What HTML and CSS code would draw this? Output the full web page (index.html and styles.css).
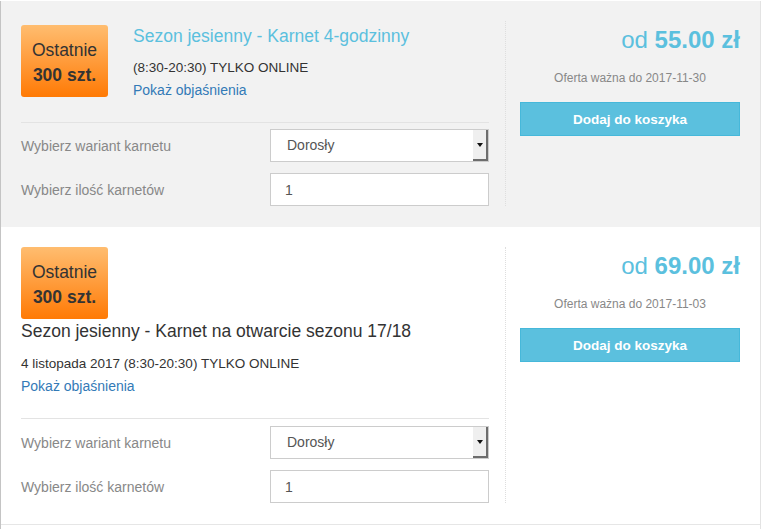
FILE: index.html
```html
<!DOCTYPE html>
<html lang="pl">
<head>
  <meta charset="UTF-8" />
  <meta name="viewport" content="width=device-width, initial-scale=1.0"/>
  <title>Karnety</title>
  <link rel="stylesheet" href="styles.css">
</head>
<body>

  <div class="list">

    <div class="item item-grey">
      <div class="item-main">
        <div class="item-head item-head-row">
          <div class="badge"><span>Ostatnie</span><strong>300 szt.</strong></div>
          <div class="item-info">
            <a class="item-title title-link" href="#">Sezon jesienny - Karnet 4-godzinny</a>
            <p class="item-desc">(8:30-20:30) TYLKO ONLINE</p>
            <a class="explain" href="#">Pokaż objaśnienia</a>
          </div>
        </div>

        <div class="options">
          <div class="option-row">
            <label>Wybierz wariant karnetu</label>
            <div class="select"><span class="select-value">Dorosły</span><span class="select-arrow"><i></i></span></div>
          </div>
          <div class="option-row">
            <label>Wybierz ilość karnetów</label>
            <input class="qty" type="text" value="1" />
          </div>
        </div>
      </div>

      <div class="item-side">
        <div class="price">od <b>55.00 zł</b></div>
        <div class="valid">Oferta ważna do 2017-11-30</div>
        <button class="add-btn">Dodaj do koszyka</button>
      </div>
    </div>

    <div class="item item-last">
      <div class="item-main">
        <div class="item-head">
          <div class="badge"><span>Ostatnie</span><strong>300 szt.</strong></div>
          <div class="item-title">Sezon jesienny - Karnet na otwarcie sezonu 17/18</div>
          <p class="item-desc">4 listopada 2017 (8:30-20:30) TYLKO ONLINE</p>
          <a class="explain" href="#">Pokaż objaśnienia</a>
        </div>

        <div class="options">
          <div class="option-row">
            <label>Wybierz wariant karnetu</label>
            <div class="select"><span class="select-value">Dorosły</span><span class="select-arrow"><i></i></span></div>
          </div>
          <div class="option-row">
            <label>Wybierz ilość karnetów</label>
            <input class="qty" type="text" value="1" />
          </div>
        </div>
      </div>

      <div class="item-side">
        <div class="price">od <b>69.00 zł</b></div>
        <div class="valid">Oferta ważna do 2017-11-03</div>
        <button class="add-btn">Dodaj do koszyka</button>
      </div>
    </div>

    <div class="item-next"></div>

  </div>

</body>
</html>
```

FILE: styles.css
```css
body {
  font-family: "Liberation Sans", Arial, sans-serif;
  background: #fff;
  color: #333;
  margin: 0;
  padding: 1px 0 0;
}

.list {
  border-left: 1px solid #c4c4c4;
  border-right: 1px solid #e3e3e3;
}

.item {
  display: flex;
  padding: 20px 20px 21px;
  background: #fff;
}

.item-grey {
  background: #f2f2f2;
}

.item-last {
  border-bottom: 1px solid #e6e6e6;
}

.item-next {
  height: 20px;
}

.item-main {
  width: 468px;
}

.item-head-row {
  display: flex;
  align-items: flex-start;
  padding-top: 4px;
}

.badge {
  width: 87px;
  height: 72px;
  border-radius: 3px;
  background: linear-gradient(#ffbd70, #ff7a05);
  display: flex;
  flex-direction: column;
  align-items: center;
  justify-content: center;
  font-size: 17.5px;
  line-height: 25px;
  color: #333;
  padding-top: 4px;
  box-sizing: border-box;
}

.item-info {
  margin-left: 25px;
}

.item-title {
  display: block;
  font-size: 17.5px;
  line-height: 22px;
  color: #333;
  margin-top: 1px;
}

.title-link {
  color: #5bc0de;
  text-decoration: none;
  margin-top: 0;
}

.item-desc {
  font-size: 13.5px;
  line-height: 18px;
  margin: 12px 0 0;
}

.item-last .item-desc {
  margin-top: 13px;
}

.explain {
  display: block;
  font-size: 14px;
  line-height: 20px;
  margin-top: 3px;
  color: #337ab7;
  text-decoration: none;
}

.options {
  margin-top: 22px;
  border-top: 1px solid #e3e3e3;
  padding-top: 6px;
}

.item-last .options {
  padding-top: 7px;
}

.option-row {
  display: flex;
  align-items: center;
  height: 33px;
}

.option-row + .option-row {
  margin-top: 11px;
}

.option-row label {
  width: 249px;
  font-size: 14px;
  color: #888;
}

.select, .qty {
  width: 219px;
  height: 33px;
  box-sizing: border-box;
  border: 1px solid #ccc;
  background: #fff;
}

.select {
  display: flex;
}

.select-value {
  flex: 1;
  padding-left: 16px;
  font-size: 14px;
  line-height: 31px;
  color: #555;
}

.select-arrow {
  width: 13px;
  background: #efefef;
  border-right: 2px solid #6d6d6d;
  border-bottom: 2px solid #6d6d6d;
  display: flex;
  align-items: center;
  justify-content: center;
}

.select-arrow i {
  width: 0;
  height: 0;
  border-left: 3px solid transparent;
  border-right: 3px solid transparent;
  border-top: 4px solid #111;
}

.qty {
  padding: 0 0 0 14px;
  font-family: inherit;
  font-size: 14px;
  color: #555;
}

.item-side {
  width: 220px;
  margin-left: 16px;
  padding-left: 14px;
  border-left: 1px dotted #dedede;
}

.price {
  padding-top: 4px;
  text-align: right;
  font-size: 24px;
  line-height: 30px;
  color: #5bc0de;
}

.valid {
  margin-top: 15px;
  text-align: center;
  font-size: 12px;
  line-height: 16px;
  color: #888;
}

.add-btn {
  display: block;
  width: 100%;
  height: 34px;
  margin-top: 16px;
  background: #5bc0de;
  border: 1px solid #46b8da;
  color: #fff;
  font-family: inherit;
  font-size: 13.5px;
  font-weight: bold;
}
```
